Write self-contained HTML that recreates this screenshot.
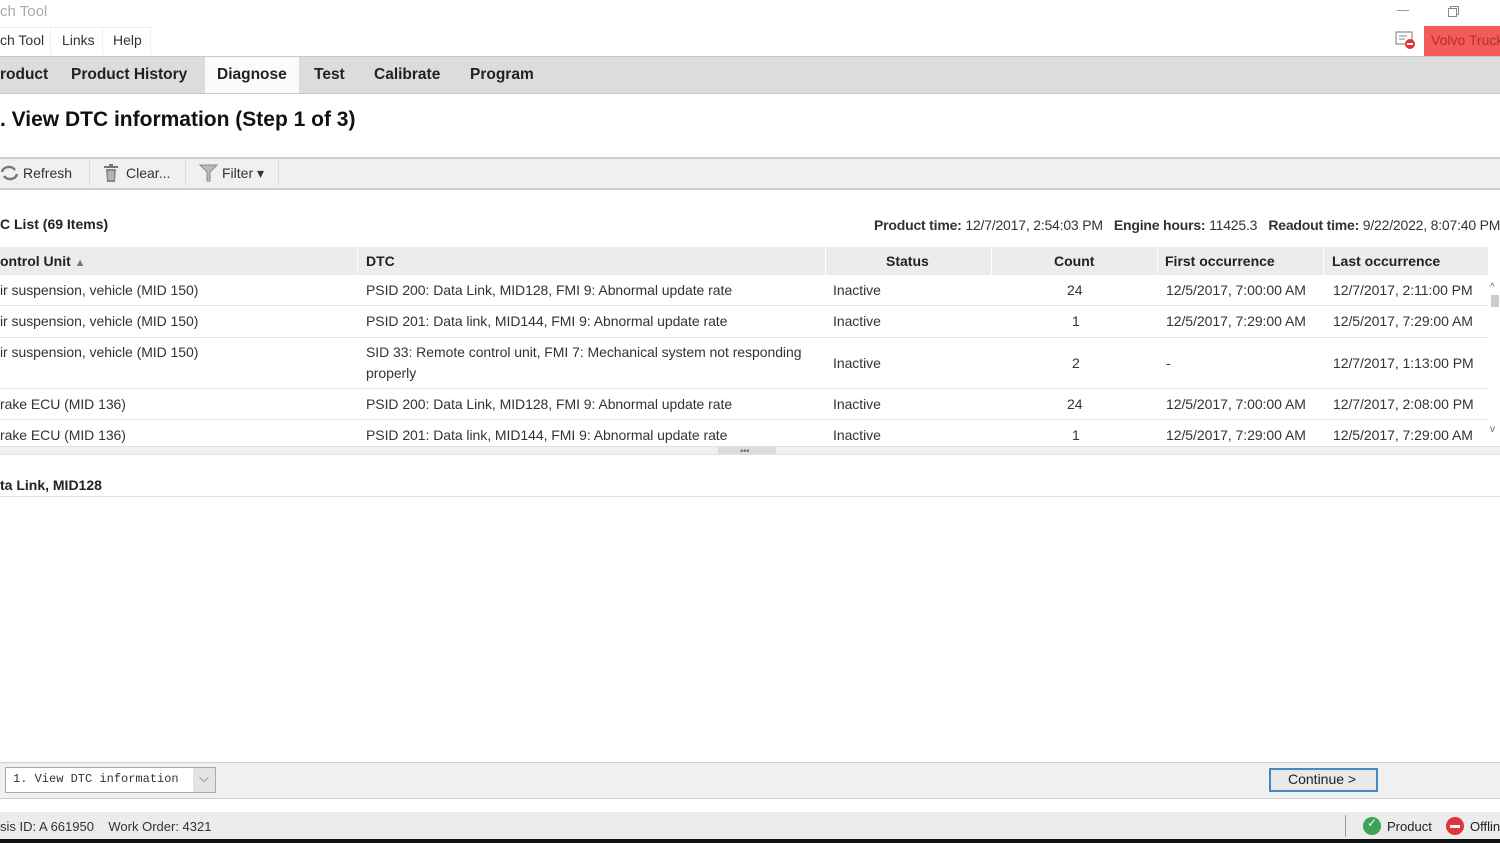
<!DOCTYPE html>
<html><head><meta charset="utf-8"><style>
*{margin:0;padding:0;box-sizing:border-box}
body{width:1500px;height:843px;overflow:hidden;background:#fff;font-family:"Liberation Sans",Arial,sans-serif;color:#222;position:relative;font-size:14px}
.a{position:absolute;white-space:nowrap}
.b{font-weight:bold}
.cell{position:absolute;white-space:nowrap;font-size:14px;color:#333;letter-spacing:-0.05px}
</style></head><body>
<div class="a" style="left:0;top:3px;font-size:15px;color:#aaa">ch Tool</div>
<div class="a" style="left:1397px;top:10px;width:12px;height:1px;background:#999"></div>
<div class="a" style="left:1450px;top:6px;width:9px;height:9px;border:1px solid #888"></div>
<div class="a" style="left:1448px;top:8px;width:9px;height:9px;border:1px solid #888;background:#fff"></div>
<div class="a" style="left:0;top:27px;width:150px;height:28px;border-top:1px solid #eee"></div>
<div class="a" style="left:0;top:32px;font-size:14px;color:#333">ch Tool</div>
<div class="a" style="left:50px;top:27px;width:1px;height:28px;background:#eee"></div>
<div class="a" style="left:62px;top:32px;font-size:14px;color:#333">Links</div>
<div class="a" style="left:102px;top:27px;width:1px;height:28px;background:#eee"></div>
<div class="a" style="left:113px;top:32px;font-size:14px;color:#333">Help</div>
<div class="a" style="left:150px;top:27px;width:1px;height:28px;background:#eee"></div>
<svg class="a" style="left:1395px;top:31px" width="22" height="20"><rect x="1" y="1" width="16" height="12" fill="#fff" stroke="#777"/><line x1="4" y1="5" x2="12" y2="5" stroke="#888"/><line x1="4" y1="8" x2="10" y2="8" stroke="#888"/><circle cx="15" cy="13" r="5" fill="#e53030"/><rect x="12" y="12" width="6" height="2" fill="#fff"/></svg>
<div class="a" style="left:1424px;top:26px;width:76px;height:30px;background:#f55a5a"></div>
<div class="a" style="left:1431px;top:32px;font-size:14px;color:#b03030">Volvo Truck</div>
<div class="a" style="left:0;top:56px;width:1500px;height:38px;background:#dcdcdc;border-top:1px solid #c6c6c6;border-bottom:1px solid #c6c6c6"></div>
<div class="a" style="left:205px;top:57px;width:94px;height:36px;background:#fbfbfb"></div>
<div class="a b" style="left:0;top:66px;font-size:15.5px;color:#222">roduct</div>
<div class="a b" style="left:71px;top:66px;font-size:15.5px;color:#222">Product History</div>
<div class="a b" style="left:217px;top:66px;font-size:15.5px;color:#222">Diagnose</div>
<div class="a b" style="left:314px;top:66px;font-size:15.5px;color:#222">Test</div>
<div class="a b" style="left:374px;top:66px;font-size:15.5px;color:#222">Calibrate</div>
<div class="a b" style="left:470px;top:66px;font-size:15.5px;color:#222">Program</div>
<div class="a b" style="left:0;top:108px;font-size:21px;color:#111">. View DTC information (Step 1 of 3)</div>
<div class="a" style="left:0;top:157px;width:1500px;height:33px;background:#f0f0f0;border-top:2px solid #cfcfcf;border-bottom:2px solid #cfcfcf"></div>
<svg class="a" style="left:0;top:164px" width="20" height="18"><path d="M2 8a7 6 0 0 1 13-2M17 10a7 6 0 0 1-13 2" stroke="#777" stroke-width="2.5" fill="none"/></svg>
<div class="a" style="left:23px;top:165px;color:#333">Refresh</div>
<div class="a" style="left:89px;top:160px;width:1px;height:26px;background:#ddd"></div>
<svg class="a" style="left:103px;top:163px" width="16" height="20"><rect x="1" y="3" width="14" height="2" fill="#777"/><rect x="6" y="1" width="4" height="2" fill="#777"/><path d="M3 6h10l-1 13H4z" fill="#888"/><path d="M6 8v9M8 8v9M10 8v9" stroke="#ddd"/></svg>
<div class="a" style="left:126px;top:165px;color:#333">Clear...</div>
<div class="a" style="left:185px;top:160px;width:1px;height:26px;background:#ddd"></div>
<svg class="a" style="left:199px;top:164px" width="20" height="18"><path d="M1 1h17l-7 7v9h-3v-9z" fill="#bbb" stroke="#888"/></svg>
<div class="a" style="left:222px;top:165px;color:#333">Filter ▾</div>
<div class="a" style="left:278px;top:160px;width:1px;height:26px;background:#ddd"></div>
<div class="a b" style="left:0;top:216px;font-size:14px;color:#222">C List (69 Items)</div>
<div class="a" style="left:874px;top:217px;font-size:14px;color:#333;letter-spacing:-0.2px"><b>Product time:</b> 12/7/2017, 2:54:03 PM &nbsp; <b>Engine hours:</b> 11425.3 &nbsp; <b>Readout time:</b> 9/22/2022, 8:07:40 PM</div>
<div class="a" style="left:0;top:247px;width:1488px;height:28px;background:#ececec"></div>
<div class="a" style="left:357px;top:247px;width:1px;height:28px;background:#fff"></div>
<div class="a" style="left:825px;top:247px;width:1px;height:28px;background:#fff"></div>
<div class="a" style="left:991px;top:247px;width:1px;height:28px;background:#fff"></div>
<div class="a" style="left:1157px;top:247px;width:1px;height:28px;background:#fff"></div>
<div class="a" style="left:1323px;top:247px;width:1px;height:28px;background:#fff"></div>
<div class="a b" style="left:0;top:253px;color:#222">ontrol Unit <span style="font-size:11px;color:#777">▲</span></div>
<div class="a b" style="left:366px;top:253px;color:#222">DTC</div>
<div class="a b" style="left:886px;top:253px;color:#222">Status</div>
<div class="a b" style="left:1054px;top:253px;color:#222">Count</div>
<div class="a b" style="left:1165px;top:253px;color:#222">First occurrence</div>
<div class="a b" style="left:1332px;top:253px;color:#222">Last occurrence</div>
<div class="a" style="left:0;top:305px;width:1488px;height:1px;background:#e6e6e6"></div>
<div class="a" style="left:0;top:337px;width:1488px;height:1px;background:#e6e6e6"></div>
<div class="a" style="left:0;top:388px;width:1488px;height:1px;background:#e6e6e6"></div>
<div class="a" style="left:0;top:419px;width:1488px;height:1px;background:#e6e6e6"></div>
<div style="position:absolute;left:0;top:275px;width:1488px;height:168px;overflow:hidden">
<div class="cell" style="left:0;top:7px">ir suspension, vehicle (MID 150)</div><div class="cell" style="left:366px;top:7px">PSID 200: Data Link, MID128, FMI 9: Abnormal update rate</div><div class="cell" style="left:833px;top:7px">Inactive</div><div class="cell" style="left:1067px;top:7px">24</div><div class="cell" style="left:1166px;top:7px">12/5/2017, 7:00:00 AM</div><div class="cell" style="left:1333px;top:7px">12/7/2017, 2:11:00 PM</div>
<div class="cell" style="left:0;top:38px">ir suspension, vehicle (MID 150)</div><div class="cell" style="left:366px;top:38px">PSID 201: Data link, MID144, FMI 9: Abnormal update rate</div><div class="cell" style="left:833px;top:38px">Inactive</div><div class="cell" style="left:1072px;top:38px">1</div><div class="cell" style="left:1166px;top:38px">12/5/2017, 7:29:00 AM</div><div class="cell" style="left:1333px;top:38px">12/5/2017, 7:29:00 AM</div>
<div class="cell" style="left:0;top:69px">ir suspension, vehicle (MID 150)</div><div class="cell" style="left:366px;top:69px">SID 33: Remote control unit, FMI 7: Mechanical system not responding</div><div class="cell" style="left:366px;top:90px">properly</div><div class="cell" style="left:833px;top:80px">Inactive</div><div class="cell" style="left:1072px;top:80px">2</div><div class="cell" style="left:1166px;top:80px">-</div><div class="cell" style="left:1333px;top:80px">12/7/2017, 1:13:00 PM</div>
<div class="cell" style="left:0;top:121px">rake ECU (MID 136)</div><div class="cell" style="left:366px;top:121px">PSID 200: Data Link, MID128, FMI 9: Abnormal update rate</div><div class="cell" style="left:833px;top:121px">Inactive</div><div class="cell" style="left:1067px;top:121px">24</div><div class="cell" style="left:1166px;top:121px">12/5/2017, 7:00:00 AM</div><div class="cell" style="left:1333px;top:121px">12/7/2017, 2:08:00 PM</div>
<div class="cell" style="left:0;top:152px">rake ECU (MID 136)</div><div class="cell" style="left:366px;top:152px">PSID 201: Data link, MID144, FMI 9: Abnormal update rate</div><div class="cell" style="left:833px;top:152px">Inactive</div><div class="cell" style="left:1072px;top:152px">1</div><div class="cell" style="left:1166px;top:152px">12/5/2017, 7:29:00 AM</div><div class="cell" style="left:1333px;top:152px">12/5/2017, 7:29:00 AM</div>
</div>
<div class="a" style="left:1490px;top:282px;font-size:10px;color:#666">^</div>
<div class="a" style="left:1491px;top:295px;width:8px;height:12px;background:#ccc"></div>
<div class="a" style="left:1490px;top:424px;font-size:10px;color:#666">v</div>
<div class="a" style="left:0;top:446px;width:1500px;height:9px;background:#f0f0f0;border-top:1px solid #e0e0e0;border-bottom:1px solid #e0e0e0"></div>
<div class="a" style="left:718px;top:447px;width:58px;height:7px;background:#dcdcdc"></div>
<div class="a" style="left:740px;top:446px;font-size:9px;color:#666">•••</div>
<div class="a b" style="left:0;top:477px;font-size:14px;color:#222">ta Link, MID128</div>
<div class="a" style="left:0;top:496px;width:1500px;height:1px;background:#ddd"></div>
<div class="a" style="left:0;top:762px;width:1500px;height:37px;background:#f0f0f0;border-top:1px solid #d0d0d0;border-bottom:1px solid #d0d0d0"></div>
<div class="a" style="left:5px;top:767px;width:211px;height:26px;background:#fff;border:1px solid #aaa"></div>
<div class="a" style="left:193px;top:768px;width:22px;height:24px;background:#e4e4e4"></div>
<div class="a" style="left:199px;top:770px;font-size:13px;color:#666">⌵</div>
<div class="a" style="left:13px;top:772px;font-family:'Liberation Mono',monospace;font-size:12px;color:#333">1. View DTC information</div>
<div class="a" style="left:1269px;top:768px;width:109px;height:24px;background:#e8e8e8;border:2px solid #4a86c0"></div>
<div class="a" style="left:1288px;top:771px;font-size:14px;color:#222">Continue &gt;</div>
<div class="a" style="left:0;top:812px;width:1500px;height:27px;background:#ececec"></div>
<div class="a" style="left:0;top:819px;font-size:13px;color:#333">sis ID: A 661950 &nbsp;&nbsp; Work Order: 4321</div>
<div class="a" style="left:1345px;top:815px;width:1px;height:22px;background:#999"></div>
<div class="a" style="left:1363px;top:817px;width:18px;height:18px;border-radius:50%;background:#3aa55a"></div>
<div class="a" style="left:1367px;top:816px;font-size:12px;color:#fff">✓</div>
<div class="a" style="left:1387px;top:819px;font-size:13px;color:#222">Product</div>
<div class="a" style="left:1446px;top:817px;width:18px;height:18px;border-radius:50%;background:#e0363a"></div>
<div class="a" style="left:1450px;top:825px;width:10px;height:3px;background:#fff"></div>
<div class="a" style="left:1470px;top:819px;font-size:13px;color:#222">Offline</div>
<div class="a" style="left:0;top:839px;width:1500px;height:4px;background:#111"></div>
</body></html>
